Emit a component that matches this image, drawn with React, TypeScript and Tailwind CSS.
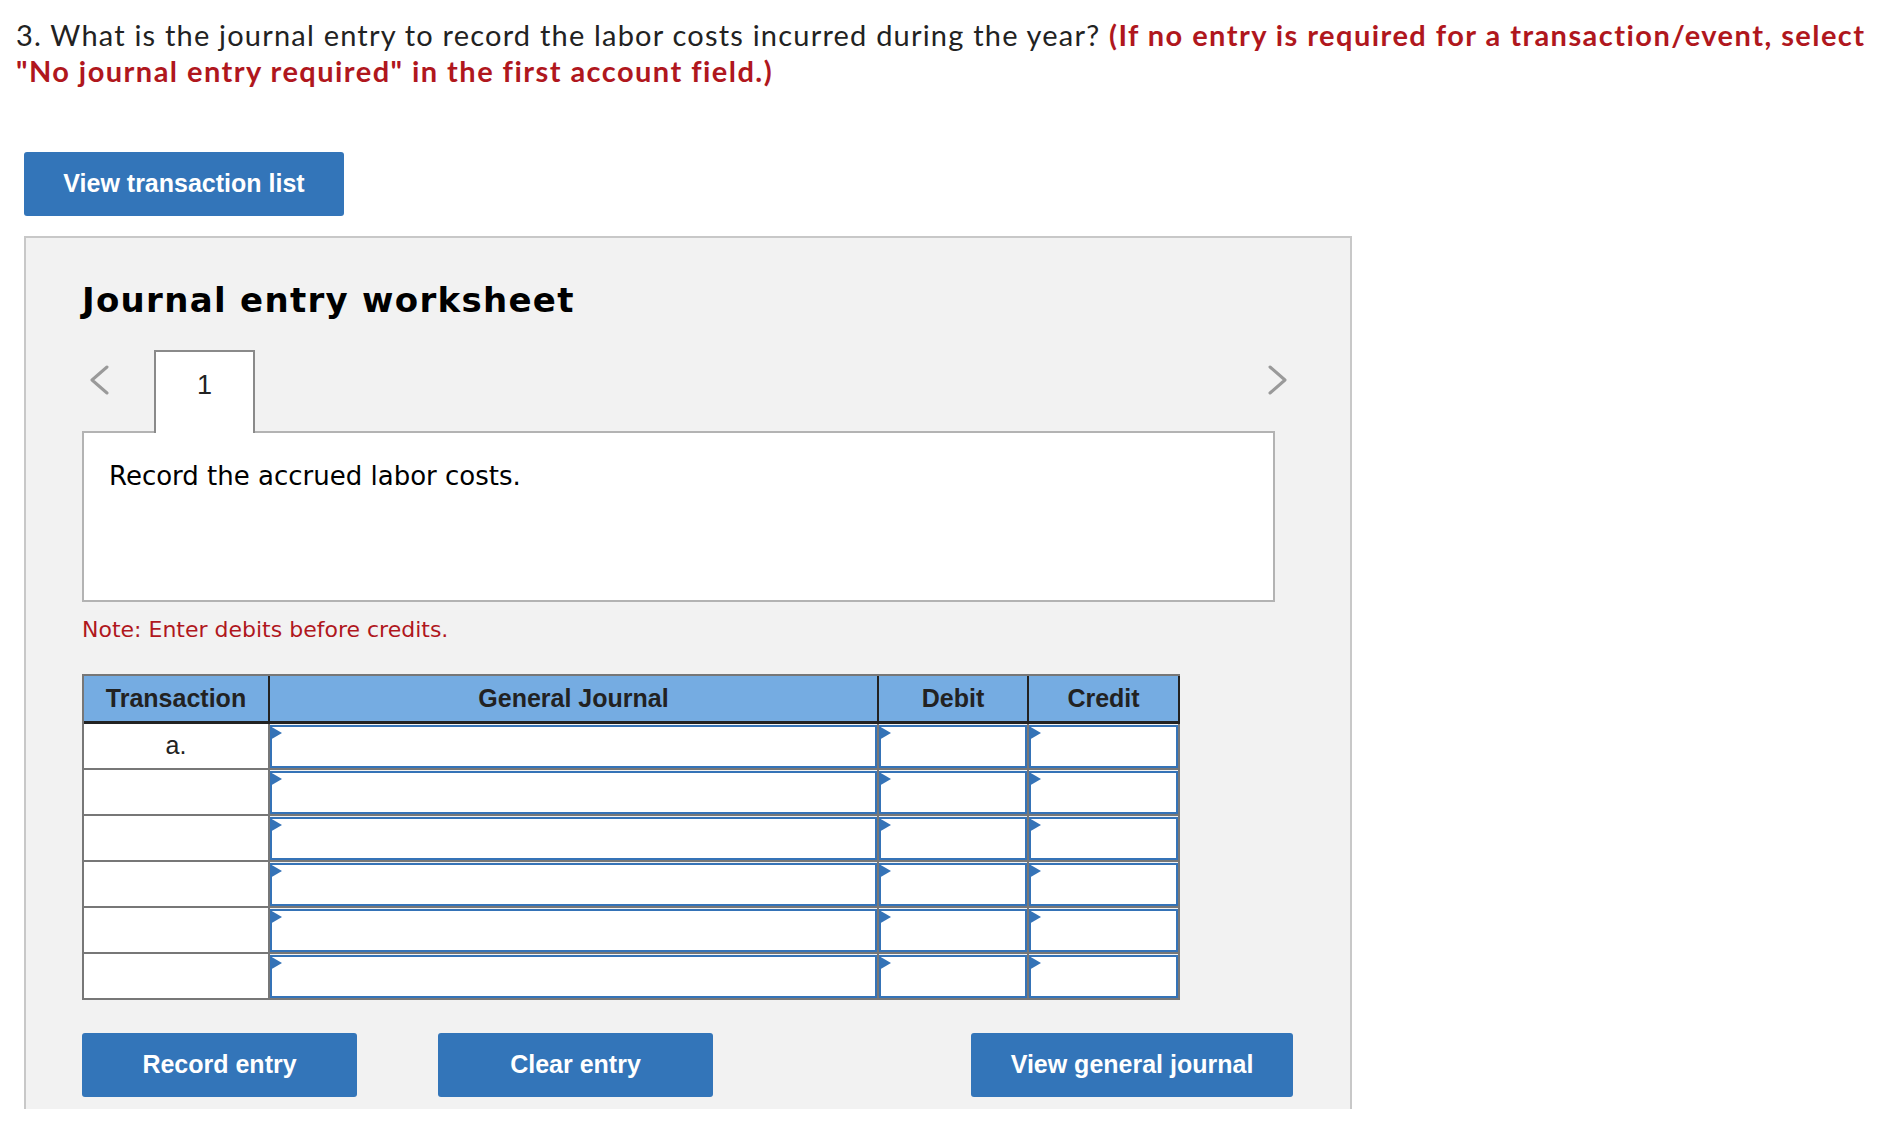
import React from "react";

const rows = ["a.", "", "", "", "", ""];

const Marker: React.FC = () => (
  <svg className="absolute -left-[2px] -top-px" width="12" height="14" viewBox="0 0 12 14">
    <polygon points="0,0 12,7 0,14" fill="#3573b7" />
  </svg>
);

const InputCell: React.FC = () => (
  <div className="h-[46px] border-r-2 border-b-2 border-[#777] pt-px">
    <div className="relative h-full w-full border-2 border-[#3573b7] bg-white">
      <Marker />
    </div>
  </div>
);

const Chevron: React.FC<{ dir: "left" | "right" }> = ({ dir }) => (
  <svg width="20" height="30" viewBox="0 0 20 30">
    <polyline
      points={dir === "left" ? "18,2 3,15 18,28" : "2,2 17,15 2,28"}
      fill="none"
      stroke="#9a9a9a"
      strokeWidth="3"
      strokeLinecap="round"
      strokeLinejoin="round"
    />
  </svg>
);

const BlueButton: React.FC<{ width: string; children: React.ReactNode }> = ({ width, children }) => (
  <button
    className={`${width} h-16 rounded-[3px] bg-[#3375b9] text-[25px] font-bold text-white font-['Liberation_Sans',Arial,sans-serif]`}
  >
    {children}
  </button>
);

const App: React.FC = () => {
  return (
    <div className="min-h-[1122px] w-[1900px] bg-white">
      {/* question */}
      <p className="pl-4 pt-[17px] text-[29px] leading-[36px] tracking-[1.2px] text-[#222] font-['Lato',sans-serif]">
        3. What is the journal entry to record the labor costs incurred during the year?{" "}
        <span className="font-bold tracking-[1.45px] text-[#b0171d]">
          (If no entry is required for a transaction/event, select
          <br />
          "No journal entry required" in the first account field.)
        </span>
      </p>

      <div className="ml-6 mt-[63px]">
        <button className="h-16 w-80 rounded-[3px] bg-[#3375b9] text-[25px] font-bold text-white font-['Liberation_Sans',Arial,sans-serif]">
          View transaction list
        </button>
      </div>

      {/* worksheet panel */}
      <div className="ml-6 mt-5 w-[1328px] border-x-2 border-t-2 border-[#c8c8c8] bg-[#f2f2f2] pl-14 pt-[42px] pb-3">
        <h2 className="text-[34px] font-bold leading-[40px] tracking-[1.3px] text-black font-['DejaVu_Sans',Verdana,sans-serif]">
          Journal entry worksheet
        </h2>

        <div className="mt-[30px] flex h-[81px] w-[1206px] items-start">
          <div className="ml-[7px] mt-[15px]">
            <Chevron dir="left" />
          </div>
          <div className="relative z-10 ml-[45px] h-[83px] w-[101px] border-x-2 border-t-2 border-[#8a8a8a] bg-white pt-[18px] text-center text-[27px] leading-[31px] text-[#222] font-['Liberation_Sans',Arial,sans-serif]">
            1
          </div>
          <div className="ml-auto mt-[15px]">
            <Chevron dir="right" />
          </div>
        </div>

        <div className="h-[171px] w-[1193px] border-2 border-[#b3b3b3] bg-white pl-[25px] pt-[28px] text-[26px] leading-[30px] text-black font-['DejaVu_Sans',Verdana,sans-serif]">
          Record the accrued labor costs.
        </div>

        <p className="mt-[15px] text-[22px] leading-[26px] text-[#b0171d] font-['DejaVu_Sans',Verdana,sans-serif]">
          Note: Enter debits before credits.
        </p>

        {/* journal table */}
        <div className="mt-[31px] grid w-[1098px] grid-cols-[186px_609px_150px_151px] border-l-2 border-t-2 border-[#777] font-['Liberation_Sans',Arial,sans-serif] text-[25px] text-[#222]">
          {["Transaction", "General Journal", "Debit", "Credit"].map((h) => (
            <div
              key={h}
              className="flex h-12 items-center justify-center border-r-2 border-b-[3px] border-[#222] bg-[#75ace2] font-bold"
            >
              {h}
            </div>
          ))}
          {rows.map((label, i) => (
            <React.Fragment key={i}>
              <div className="flex h-[46px] items-center justify-center border-r-2 border-b-2 border-[#777] bg-white">
                {label}
              </div>
              <InputCell />
              <InputCell />
              <InputCell />
            </React.Fragment>
          ))}
        </div>

        <div className="mt-[33px] flex items-start">
          <BlueButton width="w-[275px]">Record entry</BlueButton>
          <div className="ml-[81px]">
            <BlueButton width="w-[275px]">Clear entry</BlueButton>
          </div>
          <div className="ml-[258px]">
            <BlueButton width="w-[322px]">View general journal</BlueButton>
          </div>
        </div>
      </div>
    </div>
  );
};

export default App;
